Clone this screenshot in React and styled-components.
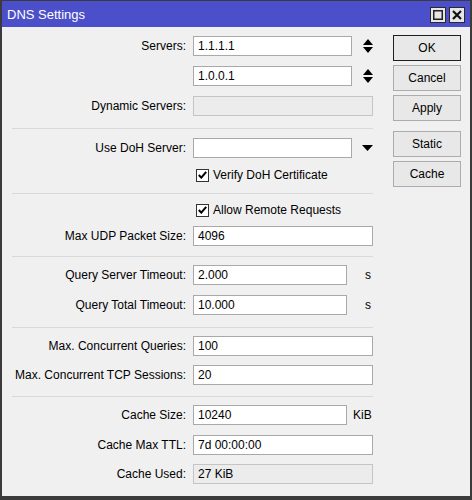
import React from 'react'
import styled, {createGlobalStyle} from 'styled-components'

const GlobalStyle = createGlobalStyle`
  html, body {
    margin: 0;
    padding: 0;
    background: #3b3b3b;
  }
  * {
    box-sizing: border-box;
  }
`

const Window = styled.div`
  width: 472px;
  height: 500px;
  background: #3b3b3b;
  padding: 1px 2px 4px 2px;
  display: flex;
  flex-direction: column;
  font-family: "Liberation Sans", Arial, sans-serif;
  font-size: 12px;
  color: #000;
`

const TitleBar = styled.div`
  flex-shrink: 0;
  height: 26px;
  background: #4b4fc9;
  display: flex;
  align-items: center;
  justify-content: space-between;
  padding: 0 5px 0 5px;
  color: #fff;
  font-size: 13px;
`

const TitleButtons = styled.div`
  display: flex;
  gap: 3px;
  margin-top: 2px;
`

const TitleButton = styled.div`
  width: 16px;
  height: 16px;
  background: #e6e6e6;
  border: 1px solid #2a2a2a;
  display: flex;
  align-items: center;
  justify-content: center;
`

const Body = styled.div`
  flex: 1;
  min-height: 0;
  background: #f0f0f0;
  display: flex;
  padding: 0 9px 0 10px;
  gap: 20px;
`

const Form = styled.div`
  width: 361px;
`

const Section = styled.div`
  display: flex;
  flex-direction: column;
  gap: ${p => p.$gap ?? 10}px;
  padding: ${p => p.$top ?? 8}px 0 ${p => p.$bottom ?? 11}px;
  border-top: ${p => (p.$first ? 'none' : '1px solid #d9d9d9')};
`

const Row = styled.div`
  display: grid;
  grid-template-columns: 174px 180px;
  column-gap: 7px;
  align-items: center;
  height: ${p => p.$h ?? 20}px;
`

const Label = styled.div`
  text-align: right;
  white-space: nowrap;
`

const Field = styled.div`
  display: flex;
  align-items: center;
  height: 100%;
`

const Input = styled.div`
  width: ${p => p.$w ?? 180}px;
  height: 20px;
  background: ${p => (p.$disabled ? '#ececec' : '#fff')};
  border: 1px solid ${p => (p.$disabled ? '#c4c4c4' : '#a9a9a9')};
  padding: 0 4px;
  display: flex;
  align-items: center;
  white-space: nowrap;
  font-size: 12px;
`

const Unit = styled.span`
  padding-left: ${p => p.$pad}px;
`

const IconBox = styled.div`
  width: 21px;
  display: flex;
  justify-content: flex-end;
  align-items: center;
`

const CheckWrap = styled.label`
  display: flex;
  align-items: center;
  gap: 4px;
  padding-left: 3px;
  white-space: nowrap;
`

const Box = styled.span`
  width: 13px;
  height: 13px;
  background: #fff;
  border: 1px solid #333;
  display: flex;
  align-items: center;
  justify-content: center;
`

const Buttons = styled.div`
  width: 68px;
  display: flex;
  flex-direction: column;
  gap: 4px;
  padding-top: 8px;
`

const Button = styled.div`
  height: 26px;
  display: flex;
  align-items: center;
  justify-content: center;
  background: #e8e8e8;
  border: 1px solid ${p => (p.$default ? '#1f1f1f' : '#acacac')};
  box-shadow: ${p => (p.$default ? 'inset 0 0 0 1px #e8e8e8' : 'none')};
  margin-top: ${p => p.$gap ?? 0}px;
  font-size: 12px;
`

const Spinner = () => (
  <svg width="10" height="14" viewBox="0 0 10 14">
    <path d="M5 0 L10 6 H0 Z" fill="#000" />
    <path d="M0 8 H10 L5 14 Z" fill="#000" />
  </svg>
)

const DropArrow = () => (
  <svg width="11" height="6" viewBox="0 0 11 6">
    <path d="M0 0 H11 L5.5 6 Z" fill="#000" />
  </svg>
)

const Check = ({text}) => (
  <CheckWrap>
    <Box>
      <svg width="9" height="8" viewBox="0 0 9 8">
        <path d="M0.8 4 L3.3 6.6 L8.2 0.8" stroke="#000" strokeWidth="2" fill="none" />
      </svg>
    </Box>
    {text}
  </CheckWrap>
)

const TextRow = ({label, value, w, disabled, unit, pad}) => (
  <Row>
    <Label>{label}</Label>
    <Field>
      <Input $w={w} $disabled={disabled}>{value}</Input>
      {unit && <Unit $pad={pad}>{unit}</Unit>}
    </Field>
  </Row>
)

const App = () => {
  return (
    <Window>
      <GlobalStyle />
      <TitleBar>
        <span>DNS Settings</span>
        <TitleButtons>
          <TitleButton>
            <svg width="10" height="10" viewBox="0 0 10 10">
              <rect x="0.75" y="0.75" width="8.5" height="8.5" fill="none" stroke="#222" strokeWidth="1.5" />
            </svg>
          </TitleButton>
          <TitleButton>
            <svg width="10" height="10" viewBox="0 0 10 10">
              <path d="M1 1 L9 9 M9 1 L1 9" stroke="#111" strokeWidth="2.2" />
            </svg>
          </TitleButton>
        </TitleButtons>
      </TitleBar>
      <Body>
        <Form>
          <Section $first $top={9} $bottom={12}>
            <Row>
              <Label>Servers:</Label>
              <Field>
                <Input $w={159}>1.1.1.1</Input>
                <IconBox><Spinner /></IconBox>
              </Field>
            </Row>
            <Row>
              <Label></Label>
              <Field>
                <Input $w={159}>1.0.0.1</Input>
                <IconBox><Spinner /></IconBox>
              </Field>
            </Row>
            <TextRow label="Dynamic Servers:" value="" disabled />
          </Section>

          <Section $top={9} $bottom={11}>
            <Row>
              <Label>Use DoH Server:</Label>
              <Field>
                <Input $w={159}></Input>
                <IconBox><DropArrow /></IconBox>
              </Field>
            </Row>
            <Row $h={14}>
              <Label></Label>
              <Check text="Verify DoH Certificate" />
            </Row>
          </Section>

          <Section $top={9} $gap={9} $bottom={10}>
            <Row $h={14}>
              <Label></Label>
              <Check text="Allow Remote Requests" />
            </Row>
            <TextRow label="Max UDP Packet Size:" value="4096" />
          </Section>

          <Section $top={8} $bottom={12}>
            <TextRow label="Query Server Timeout:" value="2.000" w={154} unit="s" pad={18} />
            <TextRow label="Query Total Timeout:" value="10.000" w={154} unit="s" pad={18} />
          </Section>

          <Section $top={8} $gap={9} $bottom={11}>
            <TextRow label="Max. Concurrent Queries:" value="100" />
            <TextRow label="Max. Concurrent TCP Sessions:" value="20" />
          </Section>

          <Section $top={8} $gap={9.5} $bottom={10}>
            <TextRow label="Cache Size:" value="10240" w={154} unit="KiB" pad={6} />
            <TextRow label="Cache Max TTL:" value="7d 00:00:00" />
            <TextRow label="Cache Used:" value="27 KiB" disabled />
          </Section>
        </Form>
        <Buttons>
          <Button $default>OK</Button>
          <Button>Cancel</Button>
          <Button>Apply</Button>
          <Button $gap={6}>Static</Button>
          <Button>Cache</Button>
        </Buttons>
      </Body>
    </Window>
  )
}

export default App
